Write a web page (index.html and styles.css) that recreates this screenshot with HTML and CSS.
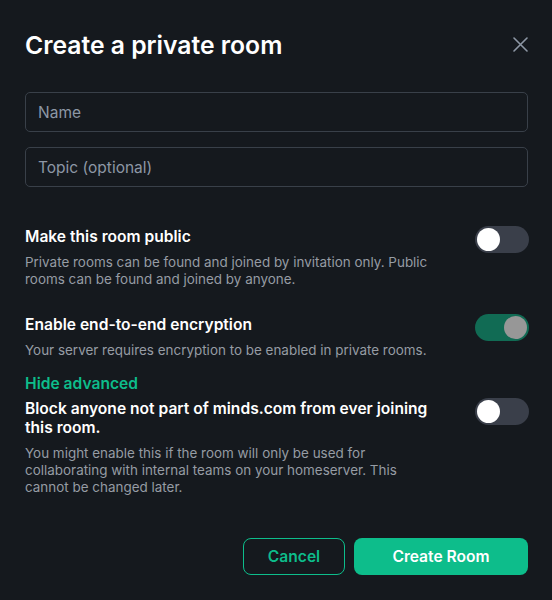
FILE: index.html
```html
<!DOCTYPE html>
<html lang="en">
<head>
<meta charset="utf-8">
<title>Create a private room</title>
<link rel="stylesheet" href="styles.css">
</head>
<body>
<div class="dialog">
  <header class="header">
    <h1 class="title">Create a private room</h1>
    <button class="close" aria-label="Close">
      <svg width="15" height="15" viewBox="0 0 15 15"><path d="M1 1L14 14M14 1L1 14" stroke="#8d97a5" stroke-width="1.6" stroke-linecap="round"/></svg>
    </button>
  </header>
  <div class="fields">
    <div class="field">Name</div>
    <div class="field">Topic (optional)</div>
  </div>
  <div class="setting s1">
    <div class="text">
      <div class="label">Make this room public</div>
      <div class="desc">Private rooms can be found and joined by invitation only. Public rooms can be found and joined by anyone.</div>
    </div>
    <div class="toggle off"><span class="knob"></span></div>
  </div>
  <div class="setting s2">
    <div class="text">
      <div class="label">Enable end-to-end encryption</div>
      <div class="desc">Your server requires encryption to be enabled in private rooms.</div>
    </div>
    <div class="toggle on"><span class="knob"></span></div>
  </div>
  <div class="advanced">Hide advanced</div>
  <div class="setting s3">
    <div class="text">
      <div class="label">Block anyone not part of minds.com from ever joining this room.</div>
      <div class="desc">You might enable this if the room will only be used for collaborating with internal teams on your homeserver. This cannot be changed later.</div>
    </div>
    <div class="toggle off"><span class="knob"></span></div>
  </div>
  <div class="buttons">
    <button class="btn cancel">Cancel</button>
    <button class="btn primary">Create Room</button>
  </div>
</div>
</body>
</html>
```
FILE: styles.css
```css
html, body {
  margin: 0;
  padding: 0;
  background: #15191e;
}
body {
  font-family: Inter, "Noto Sans", sans-serif;
  color: #ffffff;
  width: 552px;
  height: 600px;
  overflow: hidden;
}
.dialog {
  padding: 30px 24px 0 25px;
  display: flex;
  flex-direction: column;
}
.header {
  display: flex;
  align-items: center;
  justify-content: space-between;
  height: 30px;
}
.title {
  margin: 0;
  font-size: 24.7px;
  line-height: 30px;
  font-weight: 600;
  color: #ffffff;
}
.close {
  background: none;
  border: 0;
  padding: 0;
  width: 15px;
  height: 15px;
  display: flex;
  margin-top: -2px;
}
.fields {
  margin-top: 32px;
  display: flex;
  flex-direction: column;
  gap: 15px;
}
.field {
  height: 38px;
  border: 1px solid #394049;
  border-radius: 5px;
  padding-left: 12px;
  font-size: 15.5px;
  line-height: 40px;
  color: #8d97a5;
}
.setting {
  display: flex;
  align-items: flex-start;
}
.s1 { margin-top: 40px; }
.s2 { margin-top: 27px; }
.s3 { margin-top: 5px; }
.text {
  width: 412px;
}
.label {
  font-size: 15.6px;
  line-height: 19.5px;
  font-weight: 600;
  color: #ffffff;
}
.desc {
  margin-top: 7.5px;
  font-size: 13.45px;
  line-height: 16.8px;
  color: #969ca4;
}
.toggle {
  margin-left: auto;
  margin-right: -1px;
  margin-top: -1px;
  width: 54px;
  height: 27px;
  border-radius: 14px;
  display: flex;
  align-items: center;
  padding: 0 2px;
  box-sizing: border-box;
  flex-shrink: 0;
}
.toggle.off { background: #3a3f4a; }
.toggle.on {
  background: #116b54;
  justify-content: flex-end;
}
.knob {
  width: 23px;
  height: 23px;
  border-radius: 50%;
  background: #ffffff;
}
.toggle.on .knob { background: #979797; }
.advanced {
  margin-top: 16px;
  font-size: 15.6px;
  line-height: 19.5px;
  font-weight: 600;
  color: #0dbd8b;
}
.buttons {
  margin-top: 42px;
  display: flex;
  justify-content: flex-end;
  gap: 9px;
}
.btn {
  font-family: Inter, "Noto Sans", sans-serif;
  font-size: 15.6px;
  font-weight: 600;
  height: 37px;
  border-radius: 8px;
  box-sizing: border-box;
}
.cancel {
  width: 102px;
  background: transparent;
  border: 1px solid #0dbd8b;
  color: #0dbd8b;
}
.primary {
  width: 174px;
  background: #0dbd8b;
  border: 0;
  color: #ffffff;
}
```
